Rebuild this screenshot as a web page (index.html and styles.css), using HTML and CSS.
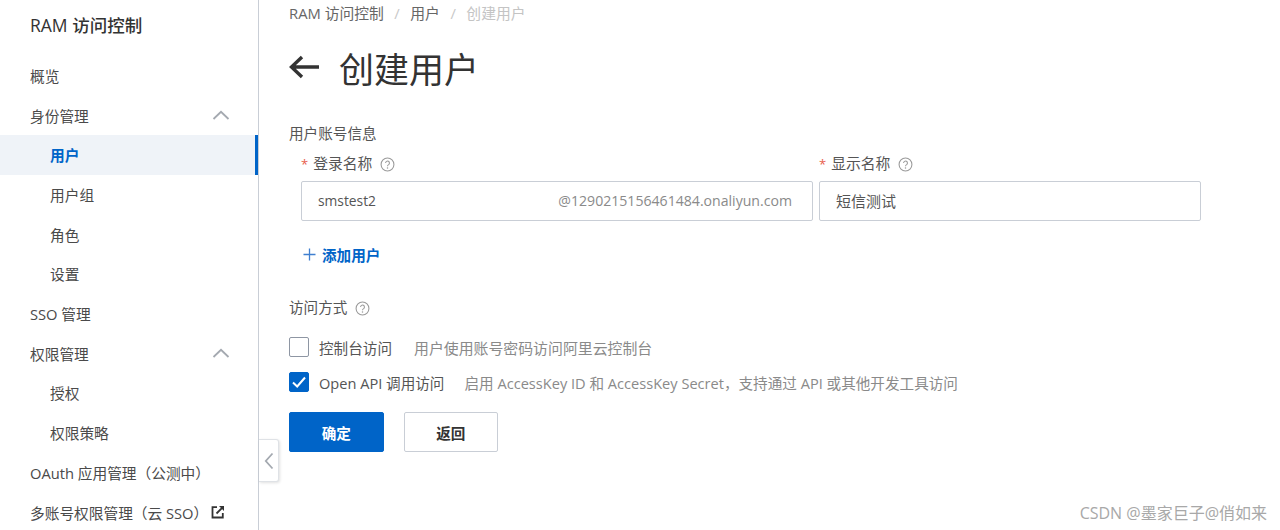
FILE: index.html
```html
<!DOCTYPE html>
<html lang="zh-CN">
<head>
    <meta charset="UTF-8">
    <title>创建用户</title>
    <link rel="stylesheet" href="styles.css">
</head>
<body>

<div class="page">
    <aside class="sidebar">
        <div class="side-title">RAM 访问控制</div>
        <nav class="menu">
            <a class="menu-item">概览</a>
            <a class="menu-item">身份管理
                <svg class="chevron" width="18" height="10" viewBox="0 0 18 10"><path d="M1.5 9 L9 1.8 L16.5 9" fill="none" stroke="#a4a9b0" stroke-width="1.8"/></svg>
            </a>
            <a class="menu-item sub active">用户</a>
            <a class="menu-item sub">用户组</a>
            <a class="menu-item sub">角色</a>
            <a class="menu-item sub">设置</a>
            <a class="menu-item">SSO 管理</a>
            <a class="menu-item">权限管理
                <svg class="chevron" width="18" height="10" viewBox="0 0 18 10"><path d="M1.5 9 L9 1.8 L16.5 9" fill="none" stroke="#a4a9b0" stroke-width="1.8"/></svg>
            </a>
            <a class="menu-item sub">授权</a>
            <a class="menu-item sub">权限策略</a>
            <a class="menu-item">OAuth 应用管理（公测中）</a>
            <a class="menu-item">多账号权限管理（云 SSO）
                <svg class="ext" width="14" height="14" viewBox="0 0 14 14"><path d="M6 2.2H1.5V12.5H11.8V8" fill="none" stroke="#333" stroke-width="1.8"/><path d="M5.5 8.5 L12 2" fill="none" stroke="#333" stroke-width="1.8"/><path d="M8 1H13V6Z" fill="#333"/></svg>
            </a>
        </nav>
    </aside>

    <div class="collapse-tab">
        <svg width="10" height="18" viewBox="0 0 10 18"><path d="M8.5 1.5 L1.8 9 L8.5 16.5" fill="none" stroke="#a4a9b0" stroke-width="1.8"/></svg>
    </div>

    <main class="main">
        <div class="breadcrumb">
            <span>RAM 访问控制</span>
            <span class="sep">/</span>
            <span>用户</span>
            <span class="sep">/</span>
            <span class="current">创建用户</span>
        </div>

        <div class="page-head">
            <svg class="back" width="31" height="24" viewBox="0 0 31 24"><path d="M30 12H3M13 2 L2.5 12 L13 22" fill="none" stroke="#333" stroke-width="3.4"/></svg>
            <h1>创建用户</h1>
        </div>

        <div class="section-label">用户账号信息</div>

        <div class="user-row">
            <div class="field login-field">
                <label class="field-label"><span class="req">*</span>登录名称
                    <svg class="help" width="15" height="15" viewBox="0 0 14 14"><use href="#help"/></svg>
                </label>
                <div class="input latin">
                    <span>smstest2</span>
                    <span class="suffix">@1290215156461484.onaliyun.com</span>
                </div>
            </div>
            <div class="field name-field">
                <label class="field-label"><span class="req">*</span>显示名称
                    <svg class="help" width="15" height="15" viewBox="0 0 14 14"><use href="#help"/></svg>
                </label>
                <div class="input"><span>短信测试</span></div>
            </div>
        </div>

        <a class="add-user">
            <svg width="13" height="13" viewBox="0 0 13 13"><path d="M6.5 0.5V12.5M0.5 6.5H12.5" stroke="#3f7fd0" stroke-width="1.3"/></svg>
            添加用户
        </a>

        <div class="access-label">访问方式
            <svg class="help" width="15" height="15" viewBox="0 0 14 14"><use href="#help"/></svg>
        </div>

        <div class="check-row">
            <span class="checkbox"></span>
            <span class="check-name">控制台访问</span>
            <span class="check-desc cn">用户使用账号密码访问阿里云控制台</span>
        </div>
        <div class="check-row">
            <span class="checkbox checked">
                <svg width="16" height="14" viewBox="0 0 16 14"><path d="M2 7.5 L6.2 11.5 L14 2.5" fill="none" stroke="#fff" stroke-width="2"/></svg>
            </span>
            <span class="check-name">Open API 调用访问</span>
            <span class="check-desc">启用 AccessKey ID 和 AccessKey Secret，支持通过 API 或其他开发工具访问</span>
        </div>

        <div class="actions">
            <button class="btn primary">确定</button>
            <button class="btn">返回</button>
        </div>
    </main>
</div>

<div class="watermark">CSDN @墨家巨子@俏如来</div>

<svg width="0" height="0" class="defs">
    <symbol id="help" viewBox="0 0 14 14">
        <circle cx="7" cy="7" r="6" fill="none" stroke="#9a9a9a" stroke-width="1"/>
        <path d="M5.2 5.6a1.8 1.8 0 1 1 2.8 1.5c-.7.4-1 .8-1 1.6" fill="none" stroke="#9a9a9a" stroke-width="1"/>
        <circle cx="7" cy="10.3" r=".7" fill="#9a9a9a"/>
    </symbol>
</svg>

</body>
</html>
```

FILE: styles.css
```css
html, body {
    margin: 0;
    padding: 0;
    height: 100%;
    overflow: hidden;
    background: #fff;
    font-family: "Open Sans", "Noto Sans CJK SC", sans-serif;
    color: #333;
}

.page {
    display: flex;
    height: 530px;
    position: relative;
}

/* Sidebar */
.sidebar {
    width: 258px;
    flex-shrink: 0;
    border-right: 1px solid #c9ced6;
}

.side-title {
    height: 51px;
    line-height: 50px;
    padding-left: 30px;
    font-size: 17.5px;
    font-weight: 500;
    color: #333;
}

.menu {
    display: flex;
    flex-direction: column;
    margin-top: 4.6px;
}

.menu-item {
    height: 39.7px;
    padding-left: 30px;
    font-size: 14.7px;
    color: #4a4a4a;
    display: flex;
    align-items: center;
    white-space: nowrap;
    box-sizing: border-box;
}

.menu-item.sub {
    padding-left: 50px;
}

.menu-item.active {
    background: #eff3f8;
    color: #0064c8;
    font-weight: 600;
    border-right: 3px solid #0064c8;
}

.chevron {
    margin-left: auto;
    margin-right: 28px;
}

.ext {
    margin-left: 3px;
}

.collapse-tab {
    position: absolute;
    left: 259px;
    top: 439px;
    width: 19px;
    height: 41px;
    background: #fff;
    border: 1px solid #dfe2e6;
    border-left: none;
    border-radius: 0 3px 3px 0;
    box-shadow: 1px 1px 3px rgba(0, 0, 0, 0.12);
    display: flex;
    align-items: center;
    justify-content: center;
}

/* Main area */
.main {
    flex: 1;
    padding-left: 30px;
}

.breadcrumb {
    display: flex;
    gap: 10.5px;
    height: 27px;
    line-height: 27px;
    font-size: 14.8px;
    color: #666;
}

.breadcrumb .sep {
    color: #c8c8c8;
}

.breadcrumb .current {
    color: #c4c4c4;
}

.page-head {
    display: flex;
    align-items: center;
    gap: 19px;
    height: 56px;
    margin-top: 12px;
}

.page-head h1 {
    margin: 0;
    font-size: 35px;
    font-weight: 400;
    color: #333;
}

.back {
    flex-shrink: 0;
}

.section-label {
    margin-top: 28px;
    line-height: 20px;
    font-size: 14.6px;
    color: #555;
}

.user-row {
    display: flex;
    gap: 6px;
    margin-top: 9px;
    padding-left: 12px;
}

.field-label {
    display: block;
    height: 29px;
    line-height: 22px;
    font-size: 14.8px;
    color: #555;
}

.req {
    color: #e8604c;
    margin-right: 5px;
    font-size: 13px;
}

.help {
    margin-left: 4px;
    vertical-align: -3px;
}

.input {
    display: flex;
    justify-content: space-between;
    align-items: center;
    height: 40px;
    box-sizing: border-box;
    padding: 0 20px 2px 16px;
    border: 1px solid #c9ced6;
    border-radius: 2px;
    font-size: 15px;
    color: #555;
}

.input.latin {
    font-size: 13.8px;
}

.login-field {
    width: 512px;
}

.name-field {
    width: 382px;
}

.suffix {
    color: #8a8a8a;
    font-size: 14.1px;
}

.add-user {
    display: flex;
    align-items: center;
    gap: 6px;
    margin-top: 23px;
    padding-left: 14px;
    height: 20px;
    font-size: 14.6px;
    font-weight: 600;
    color: #0064c8;
}

.access-label {
    margin-top: 33px;
    height: 20px;
    line-height: 20px;
    font-size: 14.6px;
    color: #555;
}

.check-row {
    display: flex;
    align-items: center;
    height: 20px;
    margin-top: 15px;
    font-size: 14.6px;
    white-space: nowrap;
}

.access-label + .check-row {
    margin-top: 20px;
}

.checkbox {
    width: 20px;
    height: 20px;
    box-sizing: border-box;
    border: 1px solid #8e96a3;
    border-radius: 2px;
    flex-shrink: 0;
    display: flex;
    align-items: center;
    justify-content: center;
    margin-right: 10px;
}

.checkbox.checked {
    background: #0064c8;
    border-color: #0064c8;
}

.check-name {
    color: #555;
    margin-right: 20px;
}

.check-desc {
    color: #8a8a8a;
}

.check-desc.cn {
    font-size: 14.9px;
    margin-left: 2px;
}

.actions {
    display: flex;
    gap: 20px;
    margin-top: 20px;
}

.btn {
    width: 94.5px;
    height: 40px;
    box-sizing: border-box;
    border: 1px solid #c9ced6;
    border-radius: 2px;
    background: #fff;
    font-family: inherit;
    font-size: 14.6px;
    font-weight: 600;
    color: #333;
    padding: 0;
}

.btn.primary {
    background: #0064c8;
    border-color: #0064c8;
    color: #fff;
}

.watermark {
    position: absolute;
    right: 13px;
    bottom: 6px;
    font-size: 16px;
    color: #a8a8a8;
}

.defs {
    position: absolute;
}
```
